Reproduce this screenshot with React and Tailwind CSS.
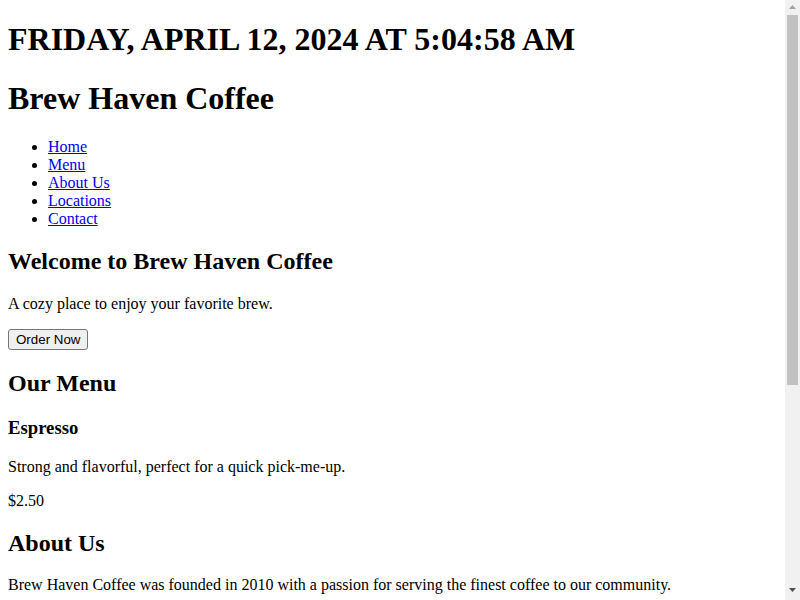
import React from "react";

const navLinks = ["Home", "Menu", "About Us", "Locations", "Contact"];

const H1 = ({ children }) => (
  <h1 className="my-[21.44px] text-[32px] font-bold leading-[normal]">{children}</h1>
);
const H2 = ({ children }) => (
  <h2 className="my-[19.92px] text-[24px] font-bold leading-[normal]">{children}</h2>
);
const P = ({ children }) => <p className="my-4">{children}</p>;

// classic page scrollbar, drawn since the page view is clipped to the window
const Scrollbar = () => (
  <div className="flex w-[15px] shrink-0 flex-col items-center bg-[#f1f1f1]">
    <svg width="15" height="15" viewBox="0 0 15 15" className="shrink-0">
      <polygon points="4,9 11,9 7.5,5" fill="#a3a3a3" />
    </svg>
    <div className="h-[370px] w-[11px] shrink-0 bg-[#c1c1c1]" />
    <div className="flex-1" />
    <svg width="15" height="15" viewBox="0 0 15 15" className="shrink-0">
      <polygon points="4,3 11,3 7.5,7" fill="#505050" />
    </svg>
  </div>
);

export default function App() {
  return (
    <div className="flex h-[600px] overflow-hidden bg-white">
      <div className="flex-1 overflow-hidden">
        <div className="m-2 font-['Liberation_Serif','Times_New_Roman',serif] text-[16px] leading-[normal] text-black">
          <header>
            <H1>FRIDAY, APRIL 12, 2024 AT 5:04:58 AM</H1>
            <H1>Brew Haven Coffee</H1>
            <nav>
              <ul className="my-4 list-disc pl-10">
                {navLinks.map((link) => (
                  <li key={link}>
                    <a href="#" className="text-[#0000ee] underline">
                      {link}
                    </a>
                  </li>
                ))}
              </ul>
            </nav>
          </header>

          <section>
            <H2>Welcome to Brew Haven Coffee</H2>
            <P>A cozy place to enjoy your favorite brew.</P>
            <button className="rounded-[3px] border border-[#767676] bg-[#efefef] px-[7px] py-[2px] font-['Liberation_Sans',Arial,sans-serif] text-[13.333px] leading-[normal]">
              Order Now
            </button>
          </section>

          <section>
            <H2>Our Menu</H2>
            <div>
              <h3 className="my-[18.72px] text-[18.72px] font-bold leading-[normal]">Espresso</h3>
              <P>Strong and flavorful, perfect for a quick pick-me-up.</P>
              <P>$2.50</P>
            </div>
          </section>

          <section>
            <H2>About Us</H2>
            <P>Brew Haven Coffee was founded in 2010 with a passion for serving the finest coffee to our community.</P>
          </section>
        </div>
      </div>
      <Scrollbar />
    </div>
  );
}
